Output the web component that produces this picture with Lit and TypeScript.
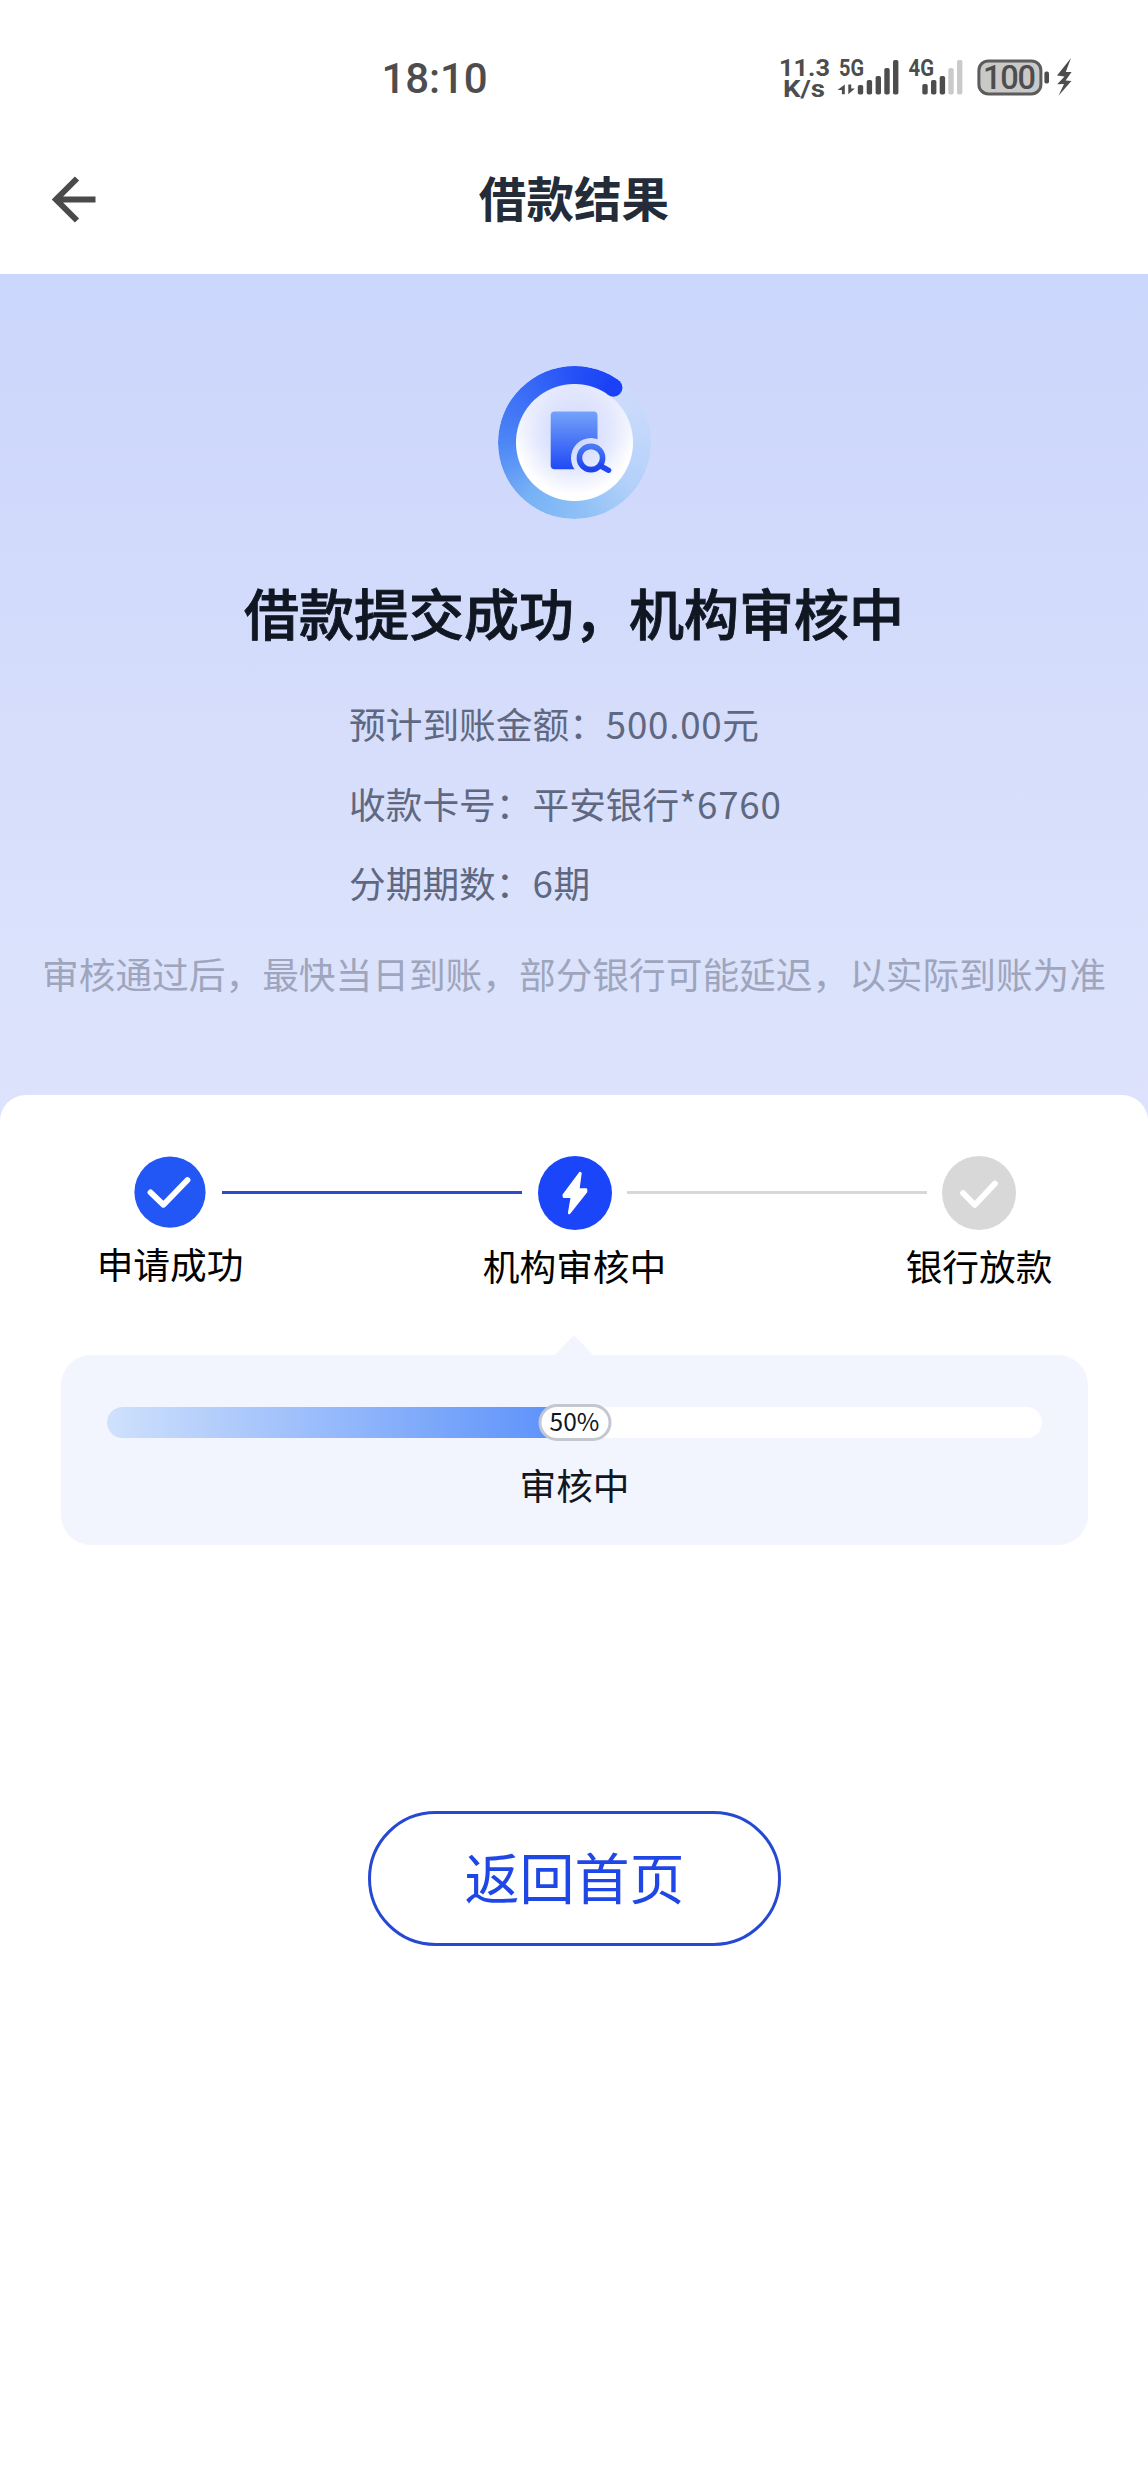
import { LitElement, html, css, svg } from "lit";
import { customElement, property } from "lit/decorators.js";

const bars = (
  xs: number[],
  tops: number[],
  filled: number,
) => xs.map(
  (x, i) => svg`<rect x=${x} y=${tops[i]} width="5.4" height=${38.5 - tops[i]} rx="1.8"
    fill=${i < filled ? "#4d4d4d" : "#cacaca"} />`,
);

@customElement("status-bar")
class StatusBar extends LitElement {
  static styles = css`
    :host {
      display: flex;
      height: 126px;
      box-sizing: border-box;
      padding: 56px 74px 0 383px;
      justify-content: space-between;
      align-items: flex-start;
      font-family: Roboto, sans-serif;
      color: #4d4d4d;
    }
    svg { display: block; overflow: visible; }
    .right { display: flex; }
    text { font-family: Roboto, "Noto Sans CJK SC", sans-serif; fill: #4d4d4d; }
    .clock { font-size: 42px; font-weight: 500; }
    .small { font-size: 24px; font-weight: 700; }
    .level { font-size: 32.5px; font-weight: 500; }
  `;

  render() {
    return html`
      <svg width="106" height="44" viewBox="0 0 106 44">
        <text class="clock" x="-1.5" y="36.7" textLength="106">18:10</text>
      </svg>
      <div class="right">
        <svg width="59" height="44" viewBox="0 0 59 44">
          <text class="small" x="-1" y="20.4" textLength="51" lengthAdjust="spacingAndGlyphs">11.3</text>
          <text class="small" x="3" y="41.2" textLength="42" lengthAdjust="spacingAndGlyphs">K/s</text>
        </svg>
        <svg width="69" height="44" viewBox="0 0 69 44">
          <text class="small" x="0" y="20.4" textLength="25" lengthAdjust="spacingAndGlyphs">5G</text>
          <path d="M-1.5 34 L5.8 28.4 V38.3 H2.9 V34Z M9.3 28.4 H12.2 V32.4 H15.9 L9.3 38.3Z" fill="#4d4d4d" />
          ${bars([18.8, 27.7, 36.6, 45.3, 54], [29, 24, 20, 12, 4], 5)}
        </svg>
        <svg width="69" height="44" viewBox="0 0 69 44">
          <text class="small" x="0.6" y="20.4" textLength="25.5" lengthAdjust="spacingAndGlyphs">4G</text>
          ${bars([14.3, 23, 31.7, 40.3, 49], [28, 24, 20, 12, 4], 3)}
        </svg>
        <svg width="97" height="44" viewBox="0 0 97 44">
          <rect x="1.9" y="4.9" width="62" height="33" rx="9.5" fill="#c9c9c9" stroke="#5c5c5c" stroke-width="3" />
          <text class="level" x="6" y="33.2" textLength="53">100</text>
          <rect x="67.4" y="15.6" width="4.6" height="12" rx="1.8" fill="#4d4d4d" />
          <path d="M94 2 L80 19.5 L87.5 20.5 L80.2 28.2 L87 28 L81.5 39.8 L94.4 25 L88.6 24.5 L94.6 16 L88.8 16Z" fill="#4d4d4d" />
        </svg>
      </div>
    `;
  }
}

@customElement("review-badge")
class ReviewBadge extends LitElement {
  static styles = css`
    :host {
      display: grid;
      width: 153.4px;
      height: 153.4px;
      margin-left: 1px;
    }
    .disc, .ring, svg { grid-area: 1 / 1; }
    .disc {
      margin: 17px;
      border-radius: 50%;
      background:
        radial-gradient(circle at 50% 45%, rgba(199, 209, 253, 0.95) 0, rgba(214, 221, 253, 0.6) 42%, rgba(255, 255, 255, 0) 66%),
        linear-gradient(#e6eafd 0, #fff 60%);
    }
    .ring {
      border-radius: 50%;
      background: conic-gradient(
        from 35deg,
        #cfdcfb 0deg,
        #c4d8fb 40deg,
        #b4d1fa 90deg,
        #8dc0f6 140deg,
        #78b2f6 185deg,
        #4c86f6 235deg,
        #3a6df6 280deg,
        #2550f7 325deg,
        #1a41f5 360deg
      );
      -webkit-mask: radial-gradient(closest-side, transparent 58px, #000 59px);
      mask: radial-gradient(closest-side, transparent 58px, #000 59px);
    }
    svg { width: 100%; height: 100%; z-index: 1; }
  `;

  render() {
    return html`
      <div class="disc"></div>
      <div class="ring"></div>
      <svg viewBox="0 0 153.4 153.4">
        <defs>
          <linearGradient id="doc" x1="0" y1="0" x2="0" y2="1">
            <stop offset="0" stop-color="#73a3f9" />
            <stop offset="1" stop-color="#2149f5" />
          </linearGradient>
          <linearGradient id="lens" x1="0" y1="0" x2="0" y2="1">
            <stop offset="0" stop-color="#4a79f6" />
            <stop offset="1" stop-color="#1b42ee" />
          </linearGradient>
          <mask id="cut">
            <rect width="153.4" height="153.4" fill="#fff" />
            <circle cx="93" cy="92" r="20" fill="#000" />
          </mask>
        </defs>
        <circle cx="115.4" cy="21.6" r="9.1" fill="#1a41f5" />
        <rect x="52.7" y="45.6" width="46.8" height="57.6" rx="4" fill="url(#doc)" mask="url(#cut)" />
        <circle cx="93" cy="92" r="11.6" fill="none" stroke="url(#lens)" stroke-width="5.6" />
        <path d="M102.5 99.8 L110.6 104.3" stroke="#1f48f1" stroke-width="5.4" stroke-linecap="round" />
      </svg>
    `;
  }
}

type StepState = "done" | "active" | "pending";

@customElement("step-item")
class StepItem extends LitElement {
  static styles = css`
    :host {
      display: flex;
      flex-direction: column;
      align-items: center;
      width: 74px;
    }
    svg { display: block; width: 74px; height: 74px; flex: none; }
    .label {
      margin-top: 8px;
      font-size: 36.7px;
      line-height: 54px;
      white-space: nowrap;
      color: #000;
    }
    .label.done { margin-top: 6px; }
  `;

  @property() state: StepState = "pending";
  @property() label = "";

  private glyph() {
    switch (this.state) {
      case "done":
        return svg`<circle cx="37" cy="36.2" r="35.6" fill="#2357f5" />
          <path d="M17.5 36.4 L30.5 48.8 L54.5 24" fill="none" stroke="#fff" stroke-width="5.8"
            stroke-linecap="round" stroke-linejoin="round" />`;
      case "active":
        return svg`<circle cx="37" cy="37" r="37" fill="#1b45f9" />
          <path d="M42 17.2 L25.8 39 L26 40.8 H34 L31.2 57 L48 35.6 V33.6 H40.2 L42.4 17.4Z" fill="#fff"
            stroke="#fff" stroke-width="2.6" stroke-linejoin="round" />`;
      default:
        return svg`<circle cx="37" cy="37" r="37" fill="#d8d8d8" />
          <path d="M21 37 L32.8 49 L53 27.6" fill="none" stroke="#fff" stroke-width="5.8"
            stroke-linecap="round" stroke-linejoin="round" />`;
    }
  }

  render() {
    return html`
      <svg viewBox="0 0 74 74">${this.glyph()}</svg>
      <span class="label ${this.state}">${this.label}</span>
    `;
  }
}

@customElement("app-root")
class AppRoot extends LitElement {
  static styles = css`
    :host {
      display: block;
      min-height: 2492px;
      background: #fff;
      font-family: "Noto Sans CJK SC", "Noto Sans", sans-serif;
    }
    .nav {
      display: grid;
      grid-template-columns: 200px 1fr 200px;
      align-items: center;
      height: 148px;
    }
    .nav svg { display: block; margin-left: 50px; margin-top: -2px; }
    .nav h1 {
      margin: 0 0 6px;
      text-align: center;
      font-size: 47.6px;
      line-height: 70px;
      font-weight: 700;
      color: #232c38;
    }
    .hero {
      display: flex;
      flex-direction: column;
      align-items: center;
      height: 850px;
      box-sizing: border-box;
      padding-top: 91.7px;
      background: linear-gradient(#cbd6fc 0, #d4dcfb 45%, #dbe2fc 80%, #dee2fc 100%);
    }
    .hero h2 {
      margin: 52px 0 0;
      font-size: 55px;
      line-height: 80px;
      font-weight: 500;
      -webkit-text-stroke: 0.9px #101722;
      color: #101722;
      white-space: nowrap;
    }
    .facts {
      display: flex;
      flex-direction: column;
      align-self: flex-start;
      margin: 33px 0 0 349px;
      font-size: 36.7px;
      line-height: 79.6px;
      color: #5f6880;
      white-space: nowrap;
    }
    .number { letter-spacing: 0.75px; }
    .note {
      margin-top: 23.5px;
      font-size: 36.7px;
      line-height: 54px;
      color: #9ea5bc;
      white-space: nowrap;
    }
    .sheet {
      display: flex;
      flex-direction: column;
      align-items: center;
      margin-top: -29px;
      border-radius: 26px 26px 0 0;
      background: #fff;
      padding-top: 61px;
    }
    .steps {
      display: flex;
      width: 883px;
      margin-left: 1px;
      justify-content: space-between;
      align-items: flex-start;
      height: 139px;
    }
    .line {
      width: 300px;
      height: 3px;
      margin-top: 35px;
      background: #d8d8d8;
    }
    .line.done { background: #2c4bcd; }
    .panel {
      position: relative;
      display: flex;
      flex-direction: column;
      align-items: center;
      width: 1027px;
      height: 190px;
      box-sizing: border-box;
      margin: 60px 0 0 1px;
      padding: 52px 46px 0 46px;
      border-radius: 30px;
      background: #f2f5fe;
    }
    .pointer {
      position: absolute;
      left: 493px;
      top: -19px;
      width: 40px;
      height: 20px;
      background: #f2f5fe;
      clip-path: polygon(45% 5%, 50% 0, 55% 5%, 100% 100%, 0 100%);
    }
    .track {
      position: relative;
      width: 100%;
      height: 31px;
      border-radius: 15.5px;
      background: #fff;
    }
    .fill {
      height: 100%;
      border-radius: 15.5px 0 0 15.5px;
      background: linear-gradient(90deg, #cfe1fc, #588ffa);
    }
    .percent {
      position: absolute;
      top: -3px;
      transform: translateX(-50%);
      width: 73px;
      height: 37px;
      box-sizing: border-box;
      border: 3px solid #c4c7d0;
      border-radius: 18.5px;
      background: #fff;
      font-size: 24.5px;
      line-height: 28px;
      text-align: center;
      color: #111722;
    }
    .status {
      margin-top: 19px;
      font-size: 36.7px;
      line-height: 54px;
      color: #111722;
    }
    .home {
      display: block;
      width: 413px;
      height: 135px;
      box-sizing: border-box;
      margin: 266px 0 0 1px;
      padding: 0 0 7px;
      border: 3px solid #2648d2;
      border-radius: 68px;
      background: #fff;
      font: inherit;
      font-size: 55px;
      line-height: 80px;
      color: #1f47e6;
    }
  `;

  private readonly progress = 50;
  private readonly facts = [
    { name: "预计到账金额", bank: "", number: "500.00", unit: "元" },
    { name: "收款卡号", bank: "平安银行", number: "*6760", unit: "" },
    { name: "分期期数", bank: "", number: "6", unit: "期" },
  ];

  render() {
    return html`
      <status-bar></status-bar>
      <header class="nav">
        <svg width="48" height="50" viewBox="0 0 48 50">
          <path d="M45.5 25.5 H6 M27 4.5 L6 25.5 L27 46.5" fill="none" stroke="#4a4a4a" stroke-width="6" />
        </svg>
        <h1>借款结果</h1>
      </header>
      <section class="hero">
        <review-badge></review-badge>
        <h2>借款提交成功，机构审核中</h2>
        <div class="facts">
          ${this.facts.map(
            (f) => html`<div>${f.name}：${f.bank}<span class="number">${f.number}</span>${f.unit}</div>`,
          )}
        </div>
        <div class="note">审核通过后，最快当日到账，部分银行可能延迟，以实际到账为准</div>
      </section>
      <main class="sheet">
        <div class="steps">
          <step-item state="done" label="申请成功"></step-item>
          <div class="line done"></div>
          <step-item state="active" label="机构审核中"></step-item>
          <div class="line"></div>
          <step-item state="pending" label="银行放款"></step-item>
        </div>
        <section class="panel">
          <span class="pointer"></span>
          <div class="track">
            <div class="fill" style="width:${this.progress}%"></div>
            <span class="percent" style="left:${this.progress}%">${this.progress}%</span>
          </div>
          <div class="status">审核中</div>
        </section>
        <button class="home">返回首页</button>
      </main>
    `;
  }
}
